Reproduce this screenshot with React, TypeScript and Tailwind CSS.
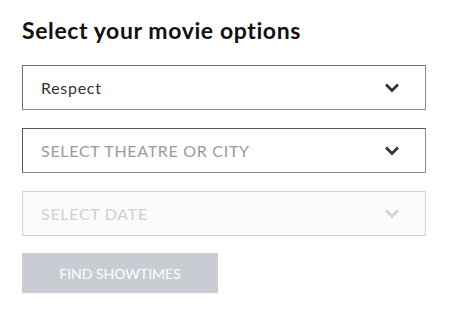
const font = { fontFamily: 'Lato, "Open Sans", sans-serif' };

function Chevron({ color }: { color: string }) {
  return (
    <svg width="14" height="10" viewBox="0 0 14 10" className={color}>
      <path d="M2 2.5 L7 7.5 L12 2.5" fill="none" stroke="currentColor" strokeWidth="2.8" strokeLinecap="square" />
    </svg>
  );
}

function SelectBox({
  label,
  textClass,
  boxClass,
  chevronClass,
}: {
  label: string;
  textClass: string;
  boxClass: string;
  chevronClass: string;
}) {
  return (
    <div className={`flex items-center justify-between h-[45px] pl-[18px] pr-[26px] border ${boxClass}`}>
      <span className={`text-[16px] tracking-[0.7px] ${textClass}`}>{label}</span>
      <Chevron color={chevronClass} />
    </div>
  );
}

export default function App() {
  return (
    <div className="w-[450px] h-[324px] bg-white px-[22px] pt-[14px]" style={font}>
      <h1 className="text-[23px] font-bold tracking-[0.6px] text-[#111] leading-[32px]">Select your movie options</h1>
      <div className="mt-[19px] w-[404px] flex flex-col gap-[18px]">
        <SelectBox
          label="Respect"
          textClass="text-[#333]"
          boxClass="border-[#6f6f6f] border-r-[#8a8a8a] border-b-[#8a8a8a] bg-white"
          chevronClass="text-[#333]"
        />
        <SelectBox
          label="SELECT THEATRE OR CITY"
          textClass="text-[#9a9a9a]"
          boxClass="border-[#555] border-r-[#8a8a8a] border-b-[#8a8a8a] bg-white"
          chevronClass="text-[#333]"
        />
        <SelectBox
          label="SELECT DATE"
          textClass="text-[#d0d0d0]"
          boxClass="border-[#d4d4d4] bg-[#fbfbfb]"
          chevronClass="text-[#cfd2d6]"
        />
      </div>
      <button className="mt-[17px] w-[196px] h-[40px] bg-[#c9ccd2] text-white text-[14px] uppercase block">
        Find Showtimes
      </button>
    </div>
  );
}
